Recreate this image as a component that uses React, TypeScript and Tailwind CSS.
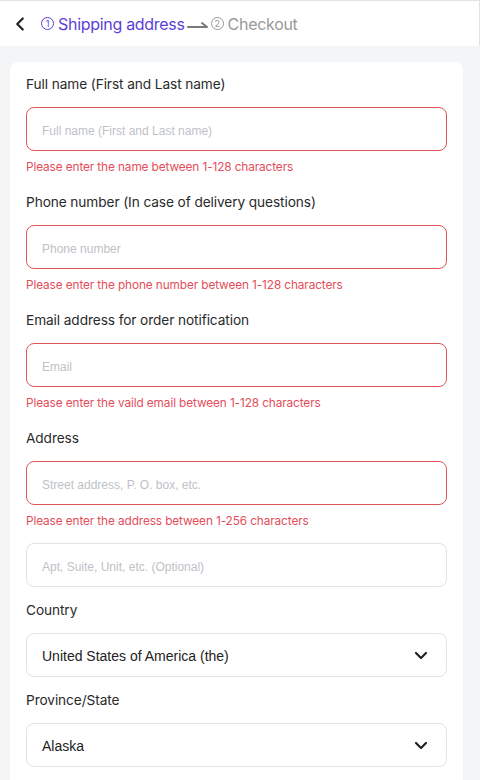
import { ChevronLeft } from 'lucide-react'

type Field = {
  label: string
  placeholder: string
  error?: string
}

const fields: Field[] = [
  { label: 'Full name (First and Last name)', placeholder: 'Full name (First and Last name)', error: 'Please enter the name between 1-128 characters' },
  { label: 'Phone number (In case of delivery questions)', placeholder: 'Phone number', error: 'Please enter the phone number between 1-128 characters' },
  { label: 'Email address for order notification', placeholder: 'Email', error: 'Please enter the vaild email between 1-128 characters' },
  { label: 'Address', placeholder: 'Street address, P. O. box, etc.', error: 'Please enter the address between 1-256 characters' },
]

const labelCls = "font-['Inter',sans-serif] text-[13.7px] leading-[20px] text-[#2a2a2a] tracking-[-0.1px]"
const errorCls = "mt-[8px] font-['Inter',sans-serif] text-[11.8px] leading-[16px] text-[#e34d5a] tracking-[-0.1px]"
const placeholderCls = "pt-[3px] font-['Liberation_Sans',Arial,sans-serif] text-[12px] text-[#c0c1c7]"

function Chevron() {
  return (
    <svg width="14" height="9" viewBox="0 0 14 9" fill="none">
      <path d="M2 2l5 5 5-5" stroke="#222" strokeWidth="2.2" strokeLinecap="round" strokeLinejoin="round" />
    </svg>
  )
}

function Select({ label, value }: { label: string; value: string }) {
  return (
    <div className="flex flex-col">
      <p className={labelCls}>{label}</p>
      <div className="mt-[13px] h-[44px] rounded-[8px] border border-[#e3e3e6] flex items-center pl-[15px] pr-[18px]">
        <span className="flex-1 pt-[2px] font-['Liberation_Sans',Arial,sans-serif] text-[14px] text-[#222]">{value}</span>
        <Chevron />
      </div>
    </div>
  )
}

export default function App() {
  return (
    <div className="w-[480px] h-[780px] overflow-hidden bg-[#f4f5f7] flex flex-col">
      {/* Шапка */}
      <div className="shrink-0 h-[46px] bg-white border-t border-[#e2e2e2] border-r flex items-center">
        <ChevronLeft className="ml-[9px] w-[22px] h-[22px] text-[#222]" strokeWidth={2.4} />
        <div className="ml-[10px] flex items-center font-['Inter',sans-serif] text-[16px] tracking-[-0.3px]">
          <span className="text-[#5b3fd6] flex items-center">
            <span className="mr-[4px] inline-flex items-center justify-center w-[13px] h-[13px] rounded-full border border-[#5b3fd6] leading-none">
              <span className="text-[9px]">1</span>
            </span>
            Shipping address
          </span>
          <svg width="22" height="10" viewBox="0 0 22 10" fill="none" className="ml-[2px] mr-[2px] mt-[3px]">
            <path d="M1 7h19M20 7l-5-4" stroke="#7a7a7a" strokeWidth="2" strokeLinecap="round" />
          </svg>
          <span className="text-[#999] flex items-center">
            <span className="mr-[4px] inline-flex items-center justify-center w-[13px] h-[13px] rounded-full border border-[#999] leading-none">
              <span className="text-[9px]">2</span>
            </span>
            Checkout
          </span>
        </div>
      </div>

      {/* Форма */}
      <div className="mt-[16px] ml-[10px] w-[453px] flex-1 bg-white rounded-t-[8px] px-[16px] pt-[12px] flex flex-col">
        <div className="flex flex-col gap-[17px]">
          {fields.map(f => (
            <div key={f.label} className="flex flex-col">
              <p className={labelCls}>{f.label}</p>
              <div className="mt-[13px] h-[44px] rounded-[8px] border border-[#e05656] flex items-center px-[15px]">
                <span className={placeholderCls}>{f.placeholder}</span>
              </div>
              {f.error && <p className={errorCls}>{f.error}</p>}
            </div>
          ))}
        </div>

        <div className="mt-[14px] h-[44px] rounded-[8px] border border-[#e3e3e6] flex items-center px-[15px]">
          <span className={placeholderCls}>Apt, Suite, Unit, etc. (Optional)</span>
        </div>

        <div className="mt-[13px] flex flex-col gap-[13px]">
          <Select label="Country" value="United States of America (the)" />
          <Select label="Province/State" value="Alaska" />
        </div>
      </div>
    </div>
  )
}
